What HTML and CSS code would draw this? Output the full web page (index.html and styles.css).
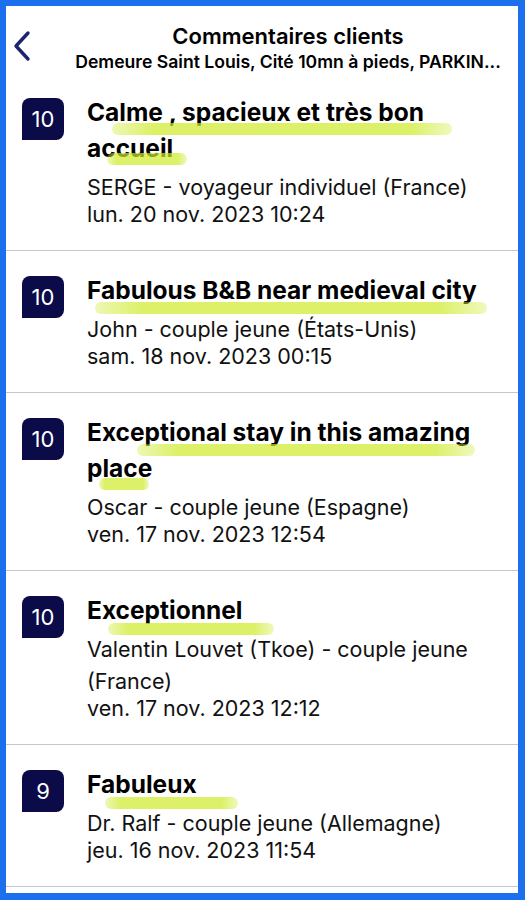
FILE: index.html
```html
<!DOCTYPE html>
<html lang="fr">
<head>
<meta charset="utf-8">
<title>Commentaires clients</title>
<link rel="stylesheet" href="styles.css">
</head>
<body>
<div class="screen">
  <header class="header">
    <button class="back" aria-label="Retour">
      <svg width="20" height="32" viewBox="0 0 20 32"><path d="M16 3 L4 16 L16 29" fill="none" stroke="#1b2470" stroke-width="3.4" stroke-linecap="round" stroke-linejoin="round"/></svg>
    </button>
    <div class="titles">
      <div class="title">Commentaires clients</div>
      <div class="subtitle">Demeure Saint Louis, Cité 10mn à pieds, PARKIN...</div>
    </div>
  </header>
  <ul class="reviews">
    <li class="review">
      <div class="score">10</div>
      <div class="body">
        <h2 class="headline">Calme , spacieux et très bon accueil
          <span class="mark" style="left:25px;top:29px;width:340px"></span>
          <span class="mark" style="left:20px;top:59px;width:80px"></span>
        </h2>
        <p class="meta name">SERGE - voyageur individuel (France)</p>
        <p class="meta date">lun. 20 nov. 2023 10:24</p>
      </div>
    </li>
    <li class="review">
      <div class="score">10</div>
      <div class="body">
        <h2 class="headline">Fabulous B&amp;B near medieval city
          <span class="mark" style="left:8px;top:30px;width:392px"></span>
        </h2>
        <p class="meta name">John - couple jeune (États-Unis)</p>
        <p class="meta date">sam. 18 nov. 2023 00:15</p>
      </div>
    </li>
    <li class="review">
      <div class="score">10</div>
      <div class="body">
        <h2 class="headline">Exceptional stay in this amazing place
          <span class="mark" style="left:50px;top:30px;width:338px"></span>
          <span class="mark" style="left:12px;top:64px;width:50px"></span>
        </h2>
        <p class="meta name">Oscar - couple jeune (Espagne)</p>
        <p class="meta date">ven. 17 nov. 2023 12:54</p>
      </div>
    </li>
    <li class="review">
      <div class="score">10</div>
      <div class="body">
        <h2 class="headline">Exceptionnel
          <span class="mark" style="left:21px;top:31px;width:166px"></span>
        </h2>
        <p class="meta name">Valentin Louvet (Tkoe) - couple jeune (France)</p>
        <p class="meta date">ven. 17 nov. 2023 12:12</p>
      </div>
    </li>
    <li class="review">
      <div class="score">9</div>
      <div class="body">
        <h2 class="headline">Fabuleux
          <span class="mark" style="left:18px;top:31px;width:133px"></span>
        </h2>
        <p class="meta name">Dr. Ralf - couple jeune (Allemagne)</p>
        <p class="meta date">jeu. 16 nov. 2023 11:54</p>
      </div>
    </li>
  </ul>
</div>
</body>
</html>
```

FILE: styles.css
```css
* { box-sizing: border-box; }
html, body { margin: 0; padding: 0; }
body {
  width: 525px;
  height: 900px;
  background: #1c70ee;
  padding: 6px 7px 7px 6px;
  font-family: Inter, "Noto Sans", "Liberation Sans", sans-serif;
  color: #111;
}
.screen {
  background: #fff;
  height: 100%;
  overflow: hidden;
}
.header {
  display: flex;
  align-items: flex-start;
  height: 86px;
  padding: 15px 8px 0 0;
}
.back {
  width: 60px;
  flex: none;
  border: 0;
  background: none;
  padding: 9px 0 0 6px;
  text-align: left;
  cursor: pointer;
}
.back svg { display: block; }
.titles {
  flex: 1;
  text-align: center;
  min-width: 0;
}
.title {
  font-size: 22px;
  font-weight: 600;
  line-height: 30px;
  color: #000;
}
.subtitle {
  font-size: 17.6px;
  font-weight: 600;
  line-height: 22px;
  color: #000;
  white-space: nowrap;
}
.reviews {
  list-style: none;
  margin: 0;
  padding: 0;
}
.review {
  display: flex;
  gap: 23px;
  padding: 0 16px 0 16px;
  border-bottom: 1px solid #c6c6c8;
}
.score {
  flex: none;
  width: 42px;
  height: 42px;
  margin-top: 25px;
  background: #0b0b49;
  color: #fff;
  border-radius: 8px 8px 8px 0;
  display: flex;
  align-items: center;
  justify-content: center;
  font-size: 22px;
  font-weight: 400;
}
.review:first-child .score { margin-top: 6px; }
.body {
  flex: 1;
  min-width: 0;
  padding: 20.5px 0 22.5px;
}
.review:first-child .body { padding-top: 1.5px; }
.headline {
  position: relative;
  margin: 0 0 5.5px;
  font-size: 24.5px;
  font-weight: 700;
  line-height: 36px;
  color: #000;
}
.mark {
  position: absolute;
  height: 12px;
  border-radius: 6px;
  background: linear-gradient(90deg, rgba(206,234,40,0.35), rgba(206,234,40,0.7) 12%, rgba(206,234,40,0.7) 88%, rgba(206,234,40,0.3));
  pointer-events: none;
}
.meta {
  margin: 0;
  font-size: 21.5px;
  color: #111;
}
.name { line-height: 32px; }
.date {
  line-height: 27px;
  margin-top: -2.5px;
}
```
